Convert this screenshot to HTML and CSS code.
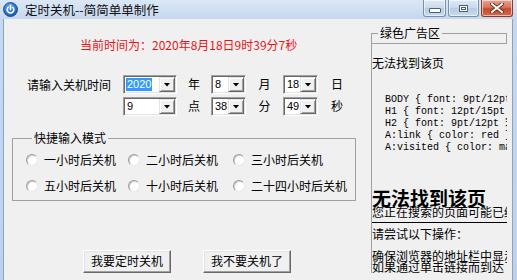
FILE: index.html
```html
<!DOCTYPE html>
<html lang="zh-CN">
<head>
<meta charset="utf-8">
<title>定时关机</title>
<link rel="stylesheet" href="styles.css">
</head>
<body>
<div class="window">
  <div class="titlebar">
    <svg class="app-icon" width="15" height="15" viewBox="0 0 15 15">
      <defs>
        <radialGradient id="ig" cx="0.4" cy="0.3" r="0.8">
          <stop offset="0" stop-color="#5aa6ee"/>
          <stop offset="1" stop-color="#0d4fa8"/>
        </radialGradient>
      </defs>
      <circle cx="7.5" cy="7.5" r="7" fill="url(#ig)" stroke="#0a3d80" stroke-width="0.8"/>
      <path d="M5.2 5.3 A3.3 3.3 0 1 0 9.8 5.3" fill="none" stroke="#fff" stroke-width="1.6" stroke-linecap="round"/>
      <line x1="7.5" y1="3.3" x2="7.5" y2="7.4" stroke="#fff" stroke-width="1.6" stroke-linecap="round"/>
    </svg>
    <span class="title">定时关机--简简单单制作</span>
    <div class="caption-buttons">
      <div class="cbtn cbtn-min"><span class="min-glyph"></span></div>
      <div class="cbtn cbtn-max"><span class="max-glyph"></span></div>
      <div class="cbtn cbtn-close">
        <svg width="14" height="10" viewBox="0 0 14 10">
          <path d="M2 1 L12 9 M12 1 L2 9" stroke="#5a2418" stroke-width="3.6" stroke-linecap="square"/>
          <path d="M2 1 L12 9 M12 1 L2 9" stroke="#fff" stroke-width="2" stroke-linecap="square"/>
        </svg>
      </div>
    </div>
  </div>

  <div class="client">
    <div class="left">
      <div class="clock">当前时间为：2020年8月18日9时39分7秒</div>

      <div class="timegrid">
        <div class="prompt">请输入关机时间</div>
        <div class="combo combo-wide"><span class="combo-value selected">2020</span><span class="combo-btn"><i class="arrow"></i></span></div>
        <div class="unit">年</div>
        <div class="combo"><span class="combo-value">8</span><span class="combo-btn"><i class="arrow"></i></span></div>
        <div class="unit">月</div>
        <div class="combo"><span class="combo-value">18</span><span class="combo-btn"><i class="arrow"></i></span></div>
        <div class="unit">日</div>

        <div class="prompt"></div>
        <div class="combo combo-wide"><span class="combo-value">9</span><span class="combo-btn"><i class="arrow"></i></span></div>
        <div class="unit">点</div>
        <div class="combo"><span class="combo-value">38</span><span class="combo-btn"><i class="arrow"></i></span></div>
        <div class="unit">分</div>
        <div class="combo"><span class="combo-value">49</span><span class="combo-btn"><i class="arrow"></i></span></div>
        <div class="unit">秒</div>
      </div>

      <fieldset class="quick">
        <legend class="quick-label">快捷输入模式</legend>
        <div class="radios">
          <label class="opt"><span class="radio"></span>一小时后关机</label>
          <label class="opt"><span class="radio"></span>二小时后关机</label>
          <label class="opt"><span class="radio"></span>三小时后关机</label>
          <label class="opt"><span class="radio"></span>五小时后关机</label>
          <label class="opt"><span class="radio"></span>十小时后关机</label>
          <label class="opt"><span class="radio"></span>二十四小时后关机</label>
        </div>
      </fieldset>

      <div class="actions">
        <div class="btn">我要定时关机</div>
        <div class="btn">我不要关机了</div>
      </div>
    </div>

    <div class="right">
      <fieldset class="adbox">
        <legend class="ad-label">绿色广告区</legend>
      </fieldset>
      <div class="browser">
        <div class="b-title">无法找到该页</div>
        <pre class="b-code">BODY { font: 9pt/12pt 宋体 }
H1 { font: 12pt/15pt 宋体 }
H2 { font: 9pt/12pt 宋体 }
A:link { color: red }
A:visited { color: maroon }</pre>
        <div class="b-h1">无法找到该页</div>
        <div class="b-line">您正在搜索的页面可能已经删除</div>
        <div class="b-rule"></div>
        <div class="b-line b-strong">请尝试以下操作：</div>
        <div class="b-line b-gap">确保浏览器的地址栏中显示的网站</div>
        <div class="b-line b-tight">如果通过单击链接而到达了该网页</div>
      </div>
    </div>
  </div>
</div>
</body>
</html>
```

FILE: styles.css
```css
html, body {
  margin: 0;
  padding: 0;
  width: 517px;
  height: 280px;
  overflow: hidden;
  background: #c9dbef;
}

.window {
  width: 517px;
  height: 280px;
  background: linear-gradient(#c7daf0, #bcd2ec);
  font-family: "Noto Sans CJK SC", "Noto Sans", sans-serif;
  font-size: 12px;
  color: #000;
}

/* ---------- title bar ---------- */
.titlebar {
  height: 19px;
  display: flex;
  align-items: center;
  background: linear-gradient(#dbe7f5, #c5d8ef);
}

.app-icon {
  margin-left: 3px;
  margin-top: -1px;
  flex: none;
}

.title {
  margin-left: 7px;
  line-height: 17px;
  font-size: 12.5px;
  color: #111;
}

.caption-buttons {
  margin-left: auto;
  margin-right: 4px;
  display: flex;
  align-self: flex-start;
  gap: 2px;
}

.cbtn {
  height: 17px;
  box-sizing: border-box;
  border: 1px solid #7b8fa9;
  border-top: none;
  border-radius: 0 0 3px 3px;
  display: flex;
  align-items: center;
  justify-content: center;
  background: linear-gradient(#dfe9f5 0%, #c9d9ec 50%, #b5cae3 51%, #c9dbee 100%);
  box-shadow: inset 0 0 0 1px rgba(255, 255, 255, 0.55);
}

.cbtn-min { width: 23px; }
.cbtn-max { width: 31px; }
.cbtn-close {
  width: 32px;
  border-color: #8b3a2a;
  background: linear-gradient(#e6a493 0%, #d7775e 45%, #c54a2e 55%, #d36b4b 100%);
}

.min-glyph {
  width: 10px;
  height: 3px;
  margin-top: 5px;
  background: #fff;
  border: 1px solid #4c5e78;
  border-radius: 1px;
}

.max-glyph {
  width: 7px;
  height: 5px;
  border: 1px solid #4c5e78;
  box-shadow: inset 0 0 0 1px #fff, inset 0 0 0 2px #4c5e78;
  background: #fff;
}

/* ---------- client ---------- */
.client {
  margin-left: 3px;
  width: 510px;
  height: 261px;
  box-sizing: border-box;
  border-left: 1px solid #8aa3c2;
  border-right: 1px solid #8aa3c2;
  background: #f0f0f0;
  display: flex;
}

.left {
  width: 364px;
  flex: none;
}

.clock {
  padding-top: 19px;
  padding-left: 76px;
  line-height: 14px;
  color: #e8141a;
}

/* time entry grid */
.timegrid {
  margin-top: 23px;
  margin-left: 23px;
  display: grid;
  grid-template-columns: 96px 54px 34px 35px 37px 35px 38px;
  grid-auto-rows: 19px;
  row-gap: 3px;
}

.prompt {
  line-height: 19px;
}

.unit {
  line-height: 18px;
  text-align: center;
}

.combo {
  box-sizing: border-box;
  height: 19px;
  border: 1px solid;
  border-color: #a0a0a0 #fff #fff #a0a0a0;
  box-shadow: inset 1px 1px 0 #696969, inset -1px -1px 0 #e3e3e3;
  background: #fff;
  display: flex;
  align-items: stretch;
}

.combo-value {
  flex: 1;
  margin: 2px 0 2px 2px;
  font-family: "Liberation Sans", Arial, sans-serif;
  font-size: 11px;
  line-height: 13px;
  padding-left: 1px;
}

.combo-value.selected {
  flex: none;
  width: 25px;
  background: #3399ff;
  color: #fff;
}

.combo-wide .combo-value.selected + .combo-btn {
  margin-left: auto;
}

.combo-btn {
  width: 16px;
  margin: 1px 1px 1px 0;
  box-sizing: border-box;
  background: #f0f0f0;
  border: 1px solid;
  border-color: #e3e3e3 #696969 #696969 #e3e3e3;
  box-shadow: inset 1px 1px 0 #fff, inset -1px -1px 0 #a0a0a0;
  display: flex;
  align-items: center;
  justify-content: center;
}

.arrow {
  display: block;
  width: 7px;
  height: 4px;
  background: #000;
  clip-path: polygon(0 0, 100% 0, 50% 100%);
}

/* quick mode group */
.quick {
  margin: 15px 0 0 8px;
  padding: 8px 0 7px 13px;
  width: 344px;
  box-sizing: border-box;
  border: 1px solid #a0a0a0;
  min-width: 0;
}

.quick-label {
  margin-left: 6px;
  padding: 0 2px;
  line-height: 14px;
}

.radios {
  display: grid;
  grid-template-columns: 102px 105px 110px;
  row-gap: 12px;
}

.opt {
  display: flex;
  align-items: center;
  line-height: 14px;
  white-space: nowrap;
}

.radio {
  width: 12px;
  height: 12px;
  box-sizing: border-box;
  border-radius: 50%;
  border: 1px solid;
  border-color: #9a9a9a #e8e8e8 #e8e8e8 #9a9a9a;
  background: #fff;
  box-shadow: inset 1px 1px 0 #d0d0d0;
  margin-right: 6px;
  flex: none;
}

/* action buttons */
.actions {
  margin-top: 49px;
  margin-left: 79px;
  display: flex;
  gap: 32px;
}

.btn {
  width: 88px;
  height: 23px;
  box-sizing: border-box;
  border: 1px solid;
  border-color: #fff #696969 #696969 #fff;
  box-shadow: inset -1px -1px 0 #a0a0a0, inset 1px 1px 0 #e3e3e3;
  background: #f0f0f0;
  text-align: center;
  line-height: 20px;
}

/* ---------- right pane ---------- */
.right {
  margin-left: 3px;
  padding-top: 7px;
  width: 138px;
  flex: none;
}

.adbox {
  margin: 0;
  padding: 0;
  width: 136px;
  height: 18px;
  box-sizing: border-box;
  border: 1px solid #a0a0a0;
  min-width: 0;
}

.ad-label {
  margin-left: 6px;
  padding: 0 2px;
  line-height: 14px;
}

.browser {
  width: 136px;
  height: 229px;
  box-sizing: border-box;
  border-left: 1px solid #a0a0a0;
  overflow: hidden;
  white-space: nowrap;
  background: #f0f0f0;
}

.b-title {
  margin-top: 12px;
  line-height: 14px;
}

.b-code {
  margin: 24px 0 0 13px;
  font-family: "Liberation Mono", "DejaVu Sans Mono", monospace;
  font-size: 10px;
  line-height: 12px;
}

.b-h1 {
  margin-top: 35px;
  font-size: 19px;
  font-weight: bold;
  line-height: 17px;
  font-family: "Noto Sans CJK SC", serif;
}

.b-line {
  line-height: 12px;
}

.b-rule {
  margin-top: 4px;
  height: 1px;
  background: #000;
}

.b-strong {
  margin-top: 5px;
}

.b-gap {
  margin-top: 10px;
}

.b-tight {
  margin-top: -1px;
}
```
